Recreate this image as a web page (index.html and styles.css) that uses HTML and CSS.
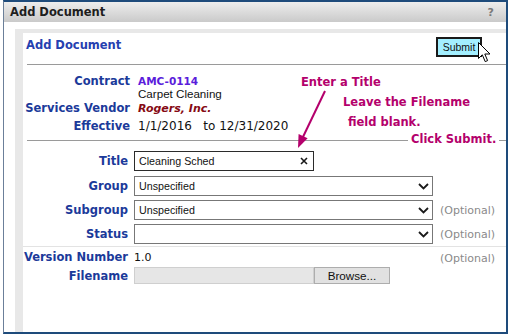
FILE: index.html
```html
<!DOCTYPE html>
<html lang="en">
<head>
  <meta charset="UTF-8" />
  <title>Add Document</title>
  <link rel="stylesheet" href="styles.css">
</head>
<body>
  <div class="dialog">
    <div class="titlebar">
      <span class="title">Add Document</span>
      <span class="help">?</span>
    </div>
    <div class="dlg-body">
      <div class="frame">
        <div class="panel">
          <div class="panel-head">
            <h2>Add Document</h2>
            <button type="button" class="submit">Submit</button>
          </div>
          <div class="rule"></div>

          <div class="info">
            <div class="irow irow-contract">
              <span class="lbl">Contract</span>
              <div class="ival">
                <div class="code">AMC-0114</div>
                <div class="desc">Carpet Cleaning</div>
              </div>
            </div>
            <div class="irow irow-vendor">
              <span class="lbl">Services Vendor</span>
              <span class="vendor">Rogers, Inc.</span>
            </div>
            <div class="irow irow-dates">
              <span class="lbl">Effective</span>
              <span class="dates">1/1/2016&nbsp;&nbsp; to 12/31/2020</span>
            </div>
          </div>
          <div class="rule rule-info"></div>

          <div class="form">
            <div class="frow frow-title">
              <label class="flbl">Title</label>
              <div class="field">
                <span>Cleaning Sched</span>
                <svg class="clear" width="8" height="8" viewBox="0 0 8 8"><path d="M1 1L7 7M7 1L1 7" stroke="#1a1a1a" stroke-width="1.6"/></svg>
              </div>
            </div>
            <div class="frow frow-group">
              <label class="flbl">Group</label>
              <div class="select">
                <span>Unspecified</span>
                <svg width="11" height="7" viewBox="0 0 11 7"><path d="M1 1L5.5 5.5L10 1" fill="none" stroke="#1a1a1a" stroke-width="1.8"/></svg>
              </div>
            </div>
            <div class="frow">
              <label class="flbl">Subgroup</label>
              <div class="select">
                <span>Unspecified</span>
                <svg width="11" height="7" viewBox="0 0 11 7"><path d="M1 1L5.5 5.5L10 1" fill="none" stroke="#1a1a1a" stroke-width="1.8"/></svg>
              </div>
              <span class="opt">(Optional)</span>
            </div>
            <div class="frow">
              <label class="flbl">Status</label>
              <div class="select">
                <span></span>
                <svg width="11" height="7" viewBox="0 0 11 7"><path d="M1 1L5.5 5.5L10 1" fill="none" stroke="#1a1a1a" stroke-width="1.8"/></svg>
              </div>
              <span class="opt">(Optional)</span>
            </div>
          </div>
          <div class="rule rule-light"></div>

          <div class="form form-file">
            <div class="frow frow-version">
              <label class="flbl">Version Number</label>
              <span class="version">1.0</span>
              <span class="opt opt-version">(Optional)</span>
            </div>
            <div class="frow frow-file">
              <label class="flbl">Filename</label>
              <div class="file"></div>
              <button type="button" class="browse">Browse...</button>
            </div>
          </div>
        </div>
      </div>
    </div>
  </div>

  <!-- callouts drawn over the screenshot -->
  <span class="note note-title">Enter a Title</span>
  <span class="note note-file1">Leave the Filename</span>
  <span class="note note-file2">field blank.</span>
  <span class="note note-submit">Click Submit.</span>
  <svg class="arrow" width="40" height="64" viewBox="290 88 40 64">
    <line x1="325" y1="91" x2="302" y2="139" stroke="#b4006c" stroke-width="2"/>
    <polygon points="298,148 298.6,134 307.6,138.3" fill="#b4006c"/>
  </svg>
  <svg class="cursor" width="14" height="21" viewBox="0 0 14 21">
    <path d="M0.5 0.5L0.5 16.5L4.3 12.8L7.2 19.6L9.6 18.6L6.8 12L12 12Z" fill="#fff" stroke="#000" stroke-width="1" stroke-linejoin="round"/>
  </svg>
</body>
</html>
```

FILE: styles.css
```css
body {
  margin: 0;
  width: 510px;
  height: 335px;
  overflow: hidden;
  position: relative;
  background: #fff;
  font-family: "DejaVu Sans", Verdana, sans-serif;
  color: #111;
}
.dialog {
  box-sizing: border-box;
  margin-left: 3px;
  width: 505px;
  height: 334px;
  border: 2px solid #1e4b7b;
  border-left: 1px solid #6b7f99;
  display: flex;
  flex-direction: column;
}
.titlebar {
  flex: none;
  height: 20px;
  display: flex;
  align-items: center;
  justify-content: space-between;
  padding: 0 12px 0 6px;
  background: linear-gradient(#ededed, #cacaca);
}
.title {
  font-weight: bold;
  font-size: 11.5px;
  color: #1e1e1e;
}
.help {
  font-weight: bold;
  font-size: 11px;
  color: #7a7a7a;
}
.dlg-body {
  flex: 1;
  display: flex;
  padding: 7px 0 0 11px;
}
.frame {
  flex: 1;
  display: flex;
  background: #e8e8e8;
  padding: 4px 0 0 8px;
}
.panel {
  flex: 1;
  background: #fff;
}
.panel-head {
  display: flex;
  justify-content: space-between;
  align-items: flex-start;
  padding: 4px 24px 0 3px;
}
h2 {
  margin: 0;
  font-size: 11.5px;
  line-height: 16px;
  color: #2540b0;
}
.submit {
  width: 46px;
  height: 20px;
  padding: 0;
  border: 2px solid #1a1a1a;
  border-radius: 0;
  background: #a3efff;
  font-family: "Liberation Sans", Arial, sans-serif;
  font-size: 10.5px;
  color: #111;
}
.rule {
  height: 1px;
  background: #9a9a9a;
  margin: 7px 0 0 4px;
}
.rule-info {
  margin-top: 5px;
}
.rule-light {
  margin: 2px 0 0 0;
  background: #e3e3e3;
}
.info {
  padding-top: 10px;
}
.irow {
  display: flex;
  column-gap: 8px;
}
.lbl, .flbl {
  font-weight: bold;
  font-size: 11.5px;
  color: #1b3a9a;
  text-align: right;
  white-space: nowrap;
}
.lbl {
  width: 107px;
}
.irow-contract {
  line-height: 12px;
}
.code {
  font-weight: bold;
  font-size: 10.5px;
  color: #5a1ddb;
}
.desc {
  line-height: 13px;
  font-family: "Liberation Sans", Arial, sans-serif;
  font-size: 11.6px;
}
.irow-vendor {
  line-height: 17px;
}
.vendor {
  font-weight: bold;
  font-style: italic;
  font-size: 11px;
  color: #860a14;
}
.irow-dates {
  line-height: 18px;
}
.dates {
  font-size: 12px;
}
.form {
  padding-top: 6px;
}
.frow {
  display: flex;
  align-items: center;
  margin-top: 4px;
}
.frow-group {
  margin-top: 5px;
}
.flbl {
  width: 105px;
  margin-right: 6px;
}
.field, .select {
  box-sizing: border-box;
  height: 20px;
  display: flex;
  align-items: center;
  justify-content: space-between;
  font-family: "Liberation Sans", Arial, sans-serif;
  font-size: 10.7px;
  color: #111;
}
.field {
  width: 180px;
  border: 1px solid #2b2b2b;
  padding: 0 5px 0 4px;
}
.select {
  width: 299px;
  border: 1px solid #777;
  padding: 0 3px 0 4px;
}
.opt {
  margin-left: 7px;
  font-size: 11px;
  color: #8a8a8a;
}
.form-file {
  padding-top: 0;
}
.frow-version {
  margin-top: 2px;
  height: 16px;
}
.version {
  width: 299px;
  font-size: 11px;
}
.opt-version {
  padding-top: 3px;
}
.frow-file {
  margin-top: 2px;
}
.file {
  box-sizing: border-box;
  width: 180px;
  height: 17px;
  background: #e6e6e6;
  border: 1px solid #cfcfcf;
}
.browse {
  box-sizing: border-box;
  width: 76px;
  height: 17px;
  padding: 0;
  border: 1px solid #adadad;
  border-radius: 0;
  background: #e1e1e1;
  font-family: "Liberation Sans", Arial, sans-serif;
  font-size: 11.7px;
  color: #111;
}
.note {
  position: absolute;
  font-weight: bold;
  font-size: 11.5px;
  line-height: 14px;
  color: #b4006c;
  white-space: nowrap;
}
.note-title {
  left: 301px;
  top: 75px;
}
.note-file1 {
  left: 343px;
  top: 95px;
}
.note-file2 {
  left: 348px;
  top: 115px;
}
.note-submit {
  left: 408px;
  top: 132px;
  padding: 0 3px;
  background: #fff;
}
.arrow {
  position: absolute;
  left: 290px;
  top: 88px;
}
.cursor {
  position: absolute;
  left: 478px;
  top: 42px;
}
```
